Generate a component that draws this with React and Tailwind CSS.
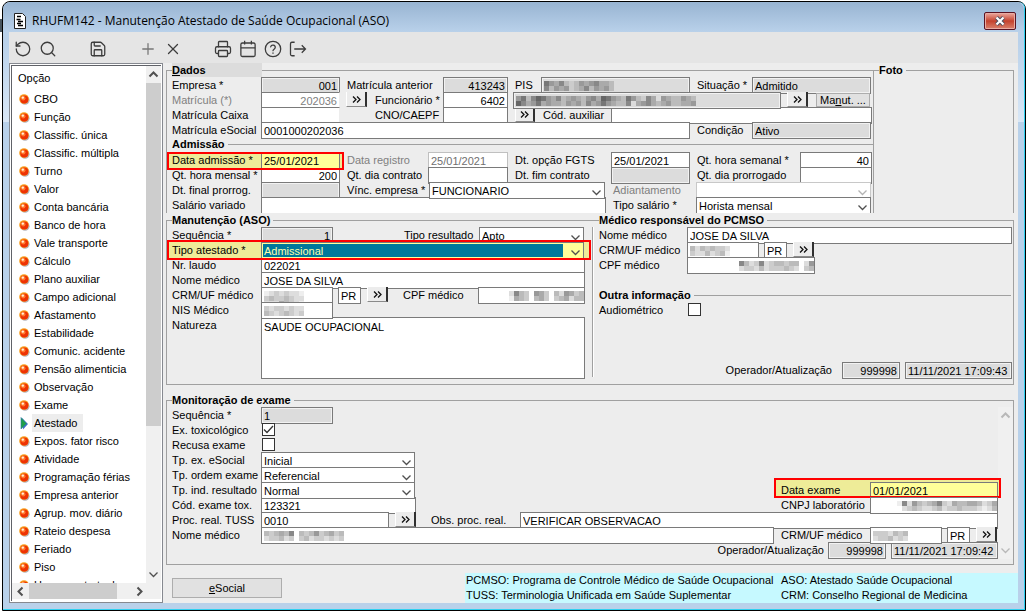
import { Plus, Printer, RotateCcw, Save, Search, X } from 'lucide-react';
import clsx from 'clsx';

const menuItems = [
  'CBO', 'Função', 'Classific. única', 'Classific. múltipla', 'Turno', 'Valor', 'Conta bancária',
  'Banco de hora', 'Vale transporte', 'Cálculo', 'Plano auxiliar', 'Campo adicional', 'Afastamento',
  'Estabilidade', 'Comunic. acidente', 'Pensão alimenticia', 'Observação', 'Exame', 'Atestado',
  'Expos. fator risco', 'Atividade', 'Programação férias', 'Empresa anterior', 'Agrup. mov. diário',
  'Rateio despesa', 'Feriado', 'Piso', 'Horas contratual',
];

function CalendarIcon() {
  return (
    <svg width="18" height="18" viewBox="0 0 24 24" fill="none" stroke="currentColor" strokeWidth="1.7">
      <rect x="2.5" y="4" width="19" height="18" rx="2" />
      <path d="M2.5 10.5h19M7.5 1v5M16.5 1v5" />
    </svg>
  );
}

function HelpIcon() {
  return (
    <svg width="18" height="18" viewBox="0 0 24 24" fill="none" stroke="currentColor" strokeWidth="1.7" strokeLinecap="round">
      <circle cx="12" cy="12" r="10.3" />
      <path d="M8.9 9.2a3.1 3.1 0 0 1 6.1.9c0 2-3 2.4-3 4.2M12 17.3v.4" />
    </svg>
  );
}

function ExitIcon() {
  return (
    <svg width="18" height="18" viewBox="0 0 24 24" fill="none" stroke="currentColor" strokeWidth="1.7">
      <path d="M7.5 3H4a2 2 0 0 0-2 2v14a2 2 0 0 0 2 2h3.5M7 12h15M17 7l5 5-5 5" />
    </svg>
  );
}

const tools = [
  ['Desfazer', RotateCcw], ['Pesquisar', Search], null, ['Salvar', Save], null, ['Incluir', Plus],
  ['Excluir', X], null, ['Imprimir', Printer], ['Calendário', CalendarIcon], ['Ajuda', HelpIcon], ['Sair', ExitIcon],
];

function Chevron({ dir = 'down', className = 'text-[#505050]' }) {
  const paths = {
    down: 'M1.5 3.5L5.5 7.5L9.5 3.5',
    up: 'M1.5 7.5L5.5 3.5L9.5 7.5',
    left: 'M7.5 1.5L3.5 5.5L7.5 9.5',
    right: 'M3.5 1.5L7.5 5.5L3.5 9.5',
  };
  return (
    <svg width="11" height="11" viewBox="0 0 11 11" fill="none" stroke="currentColor" strokeWidth={dir === 'down' ? 1.3 : 2} className={className}>
      <path d={paths[dir]} />
    </svg>
  );
}

function Ball() {
  return (
    <svg width="11" height="11" viewBox="0 0 11 11" className="shrink-0">
      <circle cx="6" cy="6.2" r="4.6" fill="#b4b4bc" />
      <circle cx="5" cy="5" r="4.8" fill="#f9a01e" />
      <circle cx="5.3" cy="5.4" r="4" fill="#ee3204" />
      <circle cx="4.3" cy="4.2" r="2.2" fill="#ff7a30" />
      <circle cx="3.8" cy="3.6" r="1.2" fill="#fff3d8" />
    </svg>
  );
}

function Pointer() {
  return (
    <svg width="11" height="13" viewBox="0 0 11 13" className="shrink-0">
      <path d="M3 1l6 6-5 5.5z" fill="#3f6fc4" />
      <path d="M2 .5l5.5 6L2 12z" fill="#1fa04a" stroke="#2a78a8" strokeWidth=".6" />
    </svg>
  );
}

// Masked personal data: every hex digit is the grey level of one block
function Mask({ rows, className }) {
  return (
    <svg width={rows[0].length * 5} height={rows.length * 5} shapeRendering="crispEdges" className={clsx('shrink-0', className)} aria-hidden="true">
      {rows.map((row, y) =>
        [...row].map((c, x) => c !== '.' && <rect key={`${x}-${y}`} x={x * 5} y={y * 5} width="5" height="5" fill={`#${c}${c}${c}`} />)
      )}
    </svg>
  );
}

function Row({ className, children }) {
  return <div className={clsx('flex h-[15px] items-start', className)}>{children}</div>;
}

function Label({ htmlFor, className, children }) {
  return (
    <label htmlFor={htmlFor} className={clsx('shrink-0 whitespace-nowrap leading-[17px]', className)}>
      {children}
    </label>
  );
}

function Field({ id, label, value = '', gray, right, className }) {
  return (
    <input
      id={id}
      aria-label={label}
      defaultValue={value}
      readOnly={gray}
      className={clsx(
        'h-[17px] min-w-0 rounded-none border border-[#7a7a7a] px-[2px] pt-px outline-none',
        gray ? 'bg-[#dcdcdc] shadow-[inset_0_0_0_1px_#f2f2f2]' : !className?.includes('bg-') && 'bg-white',
        right && 'text-right',
        className
      )}
    />
  );
}

// Field whose value is masked
function Hidden({ id, label, rows, gray, right, className }) {
  return (
    <div className={clsx('relative flex shrink-0', className)}>
      <Field id={id} label={label} gray={gray} className="w-full" />
      <Mask rows={rows} className={clsx('absolute top-[4px]', right ? 'right-px' : 'left-[3px]')} />
    </div>
  );
}

function Select({ id, value, disabled, className, selectClass = 'bg-white' }) {
  return (
    <div className={clsx('relative flex shrink-0', className)}>
      <select
        id={id}
        disabled={disabled}
        defaultValue={value}
        className={clsx('h-[17px] w-full appearance-none rounded-none border px-[2px] pb-[2px] outline-none', disabled ? 'border-[#c8c8c8]' : 'border-[#7a7a7a]', selectClass)}
      >
        <option>{value}</option>
      </select>
      <span className="pointer-events-none absolute right-[3px] top-[5px]">
        <Chevron className={disabled ? 'text-[#b4b4b4]' : 'text-[#505050]'} />
      </span>
    </div>
  );
}

function Lookup({ label, className = 'w-[21px]' }) {
  return (
    <button aria-label={label} className={clsx('flex h-[15px] shrink-0 items-center justify-center border-b border-l border-r-2 border-b-[#8a8a8a] border-l-white border-r-[#303030] bg-[#ececec]', className)}>
      <svg width="9" height="7" viewBox="0 0 9 7" fill="none" stroke="#111" strokeWidth="1.3">
        <path d="M1 .5l3 3-3 3M5 .5l3 3-3 3" />
      </svg>
    </button>
  );
}

function Highlight({ frame, children }) {
  return (
    <div className="relative flex">
      <span className={clsx('absolute bg-[#eeec98]', frame)} />
      <div className="relative flex">{children}</div>
      <span className={clsx('pointer-events-none absolute border-2 border-[#ff0000]', frame)} />
    </div>
  );
}

function Box({ id, checked }) {
  return (
    <span className="relative flex">
      <input id={id} type="checkbox" defaultChecked={checked} className="peer m-px size-[13px] appearance-none border border-[#333] bg-white" />
      <svg width="11" height="9" viewBox="0 0 11 9" fill="none" stroke="#333" strokeWidth="1.3" className="pointer-events-none absolute left-[2px] top-[3px] hidden peer-checked:block">
        <path d="M1 4.5l3 3L10 1" />
      </svg>
    </span>
  );
}

function Sidebar() {
  return (
    <nav className="flex w-[154px] shrink-0 flex-col border border-[#868990] bg-white p-px">
      <div className="flex min-h-0 flex-1 flex-col border-l border-t border-[#606268] pb-[2px]">
        <div className="flex h-0 min-h-0 flex-1">
          <div className="min-w-0 flex-1 overflow-hidden">
            <p className="h-[24px] pl-[6px] leading-[24px]">Opção</p>
            <ul>
              {menuItems.map((item) => (
                <li key={item} className="flex h-[18px] items-center gap-[2px] pl-[7px]">
                  {item === 'Atestado' ? <Pointer /> : <Ball />}
                  <a href="#" className={clsx('whitespace-nowrap px-[2px] leading-[18px]', item === 'Atestado' && 'bg-[#ededed] pr-[6px]')}>
                    {item}
                  </a>
                </li>
              ))}
            </ul>
          </div>
          <div className="flex w-[15px] flex-col items-center bg-[#f0f0f0]">
            <span className="flex h-[17px] items-center"><Chevron dir="up" /></span>
            <span className="w-full flex-[343] bg-[#cdcdcd]" />
            <span className="flex-[140]" />
            <span className="flex h-[17px] items-center"><Chevron dir="down" /></span>
          </div>
        </div>
        <div className="flex h-[16px] items-center bg-[#f0f0f0] pr-[15px]">
          <span className="flex w-[17px] justify-center"><Chevron dir="left" /></span>
          <span className="h-full w-[88px] bg-[#cdcdcd]" />
          <span className="flex flex-1 justify-end pr-px"><Chevron dir="right" /></span>
        </div>
      </div>
    </nav>
  );
}

function Dados() {
  return (
    <fieldset className="w-[707px] shrink-0 border-l border-t border-[#a0a0a0] pl-[5px]">
      <legend className="h-[14px] w-[90px] bg-[#dcdcdc] font-bold leading-[14px]">
        <u>D</u>ados
      </legend>
      <Row>
        <Label htmlFor="empresa" className="w-[89px]">Empresa *</Label>
        <Field id="empresa" value="001" gray right className="w-[79px]" />
        <Label htmlFor="matAnterior" className="w-[103px] pl-[7px]">Matrícula anterior</Label>
        <Field id="matAnterior" value="413243" gray right className="w-[65px]" />
        <Label htmlFor="pis" className="w-[33px] pl-[7px]">PIS</Label>
        <Hidden id="pis" gray className="w-[149px]" rows={['79a8bcb9a98aab', '8b9a9cba8b9a9b']} />
        <Label htmlFor="situacao" className="w-[62px] pl-[7px]">Situação *</Label>
        <Field id="situacao" value="Admitido" gray className="w-[119px]" />
      </Row>
      <Row>
        <Label htmlFor="matricula" className="w-[89px] text-[#808080]">Matrícula (*)</Label>
        <Field id="matricula" value="202036" right className="w-[79px] border-r-[#ededed] text-[#808080]" />
        <Lookup label="Buscar matrícula" className="ml-[6px] w-[21px]" />
        <Label htmlFor="funcionario" className="w-[76px] pl-[8px]">Funcionário *</Label>
        <Field id="funcionario" value="6402" right className="w-[65px]" />
        <Hidden label="Nome do funcionário" gray className="ml-[5px] w-[268px]" rows={['97b8679a8ba9ab98a679ab79bc8a.9abb9ab', '68a97a9aab9a9b8a979abb8.a98aba9bbaa9']} />
        <Lookup label="Buscar funcionário" className="ml-[6px] w-[21px]" />
        <button className="ml-[8px] mt-px h-[14px] w-[54px] border border-[#adadad] bg-[#e1e1e1] leading-[12px]">
          Ma<u>n</u>ut. ...
        </button>
      </Row>
      <Row>
        <Label htmlFor="matCaixa" className="w-[89px]">Matrícula Caixa</Label>
        <Field id="matCaixa" className="w-[79px] border-r-[#ededed]" />
        <Label htmlFor="cno" className="w-[103px] pl-[35px]">CNO/CAEPF</Label>
        <Field id="cno" className="w-[65px]" />
        <Lookup label="Buscar CNO" className="ml-[7px] w-[20px]" />
        <Label htmlFor="codAuxiliar" className="w-[76px] pl-[8px]">Cód. auxiliar</Label>
        <Field id="codAuxiliar" className="w-[261px]" />
      </Row>
      <Row>
        <Label htmlFor="matEsocial" className="w-[89px]">Matrícula eSocial</Label>
        <Field id="matEsocial" value="0001000202036" className="w-[429px]" />
        <Label htmlFor="condicao" className="w-[62px] pl-[7px]">Condição</Label>
        <Field id="condicao" value="Ativo" gray className="w-[119px]" />
      </Row>
      <div className="flex h-[15px] items-center gap-[3px]">
        <h2 className="font-bold leading-[13px]">Admissão</h2>
        <span className="h-px flex-1 bg-[#a0a0a0]" />
      </div>
      <Row>
        <Highlight frame="-left-[5px] -right-[4px] top-0 h-[18px]">
          <Label htmlFor="dtAdmissao" className="w-[89px]">Data admissão *</Label>
          <Field id="dtAdmissao" value="25/01/2021" className="w-[79px] bg-[#ffff99]" />
        </Highlight>
        <Label htmlFor="dtRegistro" className="w-[88px] pl-[7px] text-[#808080]">Data registro</Label>
        <Field id="dtRegistro" value="25/01/2021" className="w-[80px] border-[#c0c0c0] text-[#707070]" />
        <Label htmlFor="dtFgts" className="w-[103px] pl-[7px]">Dt. opção FGTS</Label>
        <Field id="dtFgts" value="25/01/2021" className="w-[79px]" />
        <Label htmlFor="hrSemanal" className="w-[110px] pl-[7px]">Qt. hora semanal *</Label>
        <Field id="hrSemanal" value="40" right className="w-[72px]" />
      </Row>
      <Row>
        <Label htmlFor="hrMensal" className="w-[89px]">Qt. hora mensal *</Label>
        <Field id="hrMensal" value="200" right className="w-[79px]" />
        <Label htmlFor="diaContrato" className="w-[88px] pl-[7px]">Qt. dia contrato</Label>
        <Field id="diaContrato" className="w-[80px]" />
        <Label htmlFor="fimContrato" className="w-[103px] pl-[7px]">Dt. fim contrato</Label>
        <Field id="fimContrato" gray className="w-[79px]" />
        <Label htmlFor="diaProrrogado" className="w-[110px] pl-[7px]">Qt. dia prorrogado</Label>
        <Field id="diaProrrogado" className="w-[72px]" />
      </Row>
      <Row>
        <Label htmlFor="finalProrrog" className="w-[89px]">Dt. final prorrog.</Label>
        <Field id="finalProrrog" gray className="w-[79px]" />
        <Label htmlFor="vinculo" className="w-[89px] pl-[7px]">Vínc. empresa *</Label>
        <Select id="vinculo" value="FUNCIONARIO" className="w-[176px]" />
        <Label htmlFor="adiantamento" className="w-[91px] pl-[8px] text-[#808080]">Adiantamento</Label>
        <Select id="adiantamento" value="" disabled className="w-[175px]" />
      </Row>
      <Row className="h-[16px]! overflow-hidden">
        <Label htmlFor="salVariado" className="w-[89px]">Salário variado</Label>
        <Field id="salVariado" className="w-[345px]" />
        <Label htmlFor="tipoSalario" className="w-[90px] pl-[7px]">Tipo salário *</Label>
        <Select id="tipoSalario" value="Horista mensal" className="w-[175px]" />
      </Row>
    </fieldset>
  );
}

function Manutencao() {
  return (
    <fieldset className="flex w-[431px] shrink-0 border-b border-l border-t border-[#a0a0a0] pb-[5px] pl-[5px]">
      <legend className="h-[14px] pr-[3px] font-bold leading-[14px]">Manutenção (ASO)</legend>
      <div className="flex">
        <div>
          <Row>
            <Label htmlFor="sequencia" className="w-[89px]">Sequência *</Label>
            <Field id="sequencia" value="1" gray right className="w-[72px]" />
            <Label htmlFor="tipoResultado" className="w-[146px] pl-[71px]">Tipo resultado</Label>
            <Select id="tipoResultado" value="Apto" className="w-[105px]" />
          </Row>
          <Row>
            <Highlight frame="-left-[5px] -right-[7px] -top-[2px] h-[20px]">
              <Label htmlFor="tipoAtestado" className="w-[89px]">Tipo atestado *</Label>
              <Select
                id="tipoAtestado"
                value="Admissional"
                className="w-[323px]"
                selectClass="bg-[linear-gradient(to_left,#ffff99_20px,#00789b_20px)] text-[#ffffaa] shadow-[inset_0_0_0_1px_#ffff99]"
              />
            </Highlight>
          </Row>
          <Row>
            <Label htmlFor="laudo" className="w-[89px]">Nr. laudo</Label>
            <Field id="laudo" value="022021" className="w-[324px]" />
          </Row>
          <Row>
            <Label htmlFor="medico" className="w-[89px]">Nome médico</Label>
            <Field id="medico" value="JOSE DA SILVA" className="w-[324px]" />
          </Row>
          <Row>
            <Label htmlFor="crm" className="w-[89px]">CRM/UF médico</Label>
            <Hidden id="crm" className="w-[72px]" rows={['edcdcdde', 'cbccbcdd', 'dddabcde']} />
            <Field label="UF médico" value="PR" className="ml-[5px] w-[23px]" />
            <Lookup label="Buscar médico" className="ml-[6px] w-[21px]" />
            <Label htmlFor="cpf" className="w-[90px] pl-[15px]">CPF médico</Label>
            <Hidden id="cpf" right className="w-[107px]" rows={['d8bc.9ac.bd9acb', 'eabc.bac.cbadbb']} />
          </Row>
          <Row>
            <Label htmlFor="nis" className="w-[89px]">NIS Médico</Label>
            <Hidden id="nis" className="w-[72px]" rows={['cdccdcdd', 'bcdcbcdc']} />
          </Row>
          <div className="flex">
            <Label htmlFor="natureza" className="w-[89px]">Natureza</Label>
            <textarea id="natureza" defaultValue="SAUDE OCUPACIONAL" className="h-[62px] w-[324px] resize-none border border-[#7a7a7a] bg-white px-[2px] pt-[3px] leading-[13px]" />
          </div>
        </div>
        <span className="mb-[2px] ml-[7px] w-[2px] border-r border-white bg-[#a0a0a0]" />
      </div>
    </fieldset>
  );
}

function Responsavel() {
  return (
    <fieldset className="min-w-0 flex-1 border-b border-r border-t border-[#a0a0a0] pb-[5px] pl-[2px] pr-px">
      <legend className="h-[14px] pr-[3px] font-bold leading-[14px]">Médico responsável do PCMSO</legend>
      <Row>
        <Label htmlFor="respNome" className="w-[88px]">Nome médico</Label>
        <Field id="respNome" value="JOSE DA SILVA" className="flex-1" />
      </Row>
      <Row>
        <Label htmlFor="respCrm" className="w-[88px]">CRM/UF médico</Label>
        <Hidden id="respCrm" className="w-[72px]" rows={['bdbcbccd', 'cddbdcbe']} />
        <Field label="UF do responsável" value="PR" className="ml-[5px] w-[23px]" />
        <Lookup label="Buscar responsável" className="ml-[6px] w-[21px]" />
      </Row>
      <Row>
        <Label htmlFor="respCpf" className="w-[88px]">CPF médico</Label>
        <Hidden id="respCpf" right className="w-[128px]" rows={['8bdc8dcbbcbb.d9', 'dccdbdcccbcd.cb']} />
      </Row>
      <div className="mt-[16px] flex h-[14px] items-center gap-[3px] pr-px">
        <h2 className="font-bold leading-[14px]">Outra informação</h2>
        <span className="h-px flex-1 bg-[#a0a0a0]" />
      </div>
      <Row>
        <Label htmlFor="audio" className="w-[88px]">Audiométrico</Label>
        <Box id="audio" />
      </Row>
      <Row className="mt-[45px] h-[17px]! justify-end">
        <Label htmlFor="operador" className="pr-[10px]">Operador/Atualização</Label>
        <Field id="operador" value="999998" gray right className="w-[58px]" />
        <Field label="Data da atualização" value="11/11/2021 17:09:43" gray className="ml-[5px] w-[107px]" />
      </Row>
    </fieldset>
  );
}

function Monitoracao() {
  return (
    <fieldset className="mt-[8px] border border-[#a0a0a0] pb-[5px] pl-[5px]">
      <legend className="h-[14px] pr-[3px] font-bold leading-[14px]">Monitoração de exame</legend>
      <div className="flex">
        <div className="min-w-0 flex-1">
          <Row>
            <Label htmlFor="exSeq" className="w-[89px]">Sequência *</Label>
            <Field id="exSeq" value="1" gray className="w-[72px]" />
          </Row>
          <Row>
            <Label htmlFor="toxico" className="w-[89px]">Ex. toxicológico</Label>
            <Box id="toxico" checked />
          </Row>
          <Row>
            <Label htmlFor="recusa" className="w-[89px]">Recusa exame</Label>
            <Box id="recusa" />
          </Row>
          <Row>
            <Label htmlFor="tpEsocial" className="w-[89px]">Tp. ex. eSocial</Label>
            <Select id="tpEsocial" value="Inicial" className="w-[154px]" />
          </Row>
          <Row>
            <Label htmlFor="tpOrdem" className="w-[89px]">Tp. ordem exame</Label>
            <Select id="tpOrdem" value="Referencial" className="w-[154px]" />
          </Row>
          <Row className="justify-between">
            <div className="flex">
              <Label htmlFor="tpInd" className="w-[89px]">Tp. ind. resultado</Label>
              <Select id="tpInd" value="Normal" className="w-[154px]" />
            </div>
            <Highlight frame="-left-[7px] -right-[3px] -top-[4px] h-[20px]">
              <Label htmlFor="dtExame" className="w-[89px]">Data exame</Label>
              <Field id="dtExame" value="01/01/2021" className="w-[128px] bg-[#ffff99]" />
            </Highlight>
          </Row>
          <Row className="justify-between">
            <div className="flex">
              <Label htmlFor="codTox" className="w-[89px]">Cód. exame tox.</Label>
              <Field id="codTox" value="123321" className="w-[155px]" />
            </div>
            <div className="flex">
              <Label htmlFor="cnpj" className="w-[89px]">CNPJ laboratório</Label>
              <Hidden id="cnpj" right className="w-[128px]" rows={['e8d9bcba8cdabbaabdca', '.dcbcddcbdccbcccdedb']} />
            </div>
          </Row>
          <Row>
            <Label htmlFor="tuss" className="w-[89px]">Proc. real. TUSS</Label>
            <Field id="tuss" value="0010" className="w-[128px]" />
            <Lookup label="Buscar TUSS" className="ml-[6px] w-[21px]" />
            <Label htmlFor="obs" className="w-[104px] pl-[15px]">Obs. proc. real.</Label>
            <Field id="obs" value="VERIFICAR OBSERVACAO" className="flex-1" />
          </Row>
          <Row>
            <Label htmlFor="exMedico" className="w-[89px]">Nome médico</Label>
            <Hidden id="exMedico" className="min-w-0 flex-1" rows={['bcbab8.bcb9cbacb', 'dccbdc.cbdccdcdc']} />
            <Label htmlFor="exCrm" className="w-[96px] pl-[7px]">CRM/UF médico</Label>
            <Hidden id="exCrm" className="w-[72px]" rows={['cccdbcb', 'dccbdcd']} />
            <Field label="UF do exame" value="PR" className="ml-[5px] w-[23px]" />
            <Lookup label="Buscar médico do exame" className="ml-[6px] mr-px w-[21px]" />
          </Row>
          <Row className="h-[17px]! justify-end">
            <Label htmlFor="exOperador" className="pr-[4px]">Operador/Atualização</Label>
            <Field id="exOperador" value="999998" gray right className="w-[58px]" />
            <Field label="Data da atualização do exame" value="11/11/2021 17:09:42" gray className="ml-[5px] w-[107px]" />
          </Row>
        </div>
        <div className="flex w-[15px] flex-col items-center justify-between bg-[#f0f0f0] py-[3px]">
          <Chevron dir="up" className="text-[#b8b8b8]" />
          <Chevron dir="down" className="text-[#b8b8b8]" />
        </div>
      </div>
    </fieldset>
  );
}

export default function App() {
  return (
    <div className="relative flex h-screen flex-col bg-white pb-[2px] pl-[2px] pr-[2px] pt-px font-['Liberation_Sans',Arial,sans-serif] text-[11px] text-black">
      <span className="absolute left-0 top-[19px] h-[13px] w-[2px] bg-[#48555f]" />
      <div className="flex min-h-0 flex-1 flex-col rounded-t-lg border border-black bg-[linear-gradient(#b9d1ea_40px,#d9e7f6_120px,#b9d1ea_120px)]">
        <div className="flex min-h-0 flex-1 flex-col rounded-t-md border-b border-r border-[#2fd0f0] px-[6px] pb-[6px]">
          <header className="-mx-[6px] flex h-[30px] shrink-0 items-center rounded-t-lg bg-linear-to-b from-[#98b4d2] to-[#b9d1ea] pl-[11px] pr-[8px] pt-[7px]">
            <svg width="12" height="16" viewBox="0 0 12 16" className="shrink-0">
              <path d="M.5.5h8l3 3v12h-11z" fill="#fff" stroke="#222" />
              <path d="M3 3.5h4M2.5 6.5h4M4 8.5h5M3 10.5h4M4 12.5h5" stroke="#000" strokeWidth="1.4" />
            </svg>
            <h1 className="flex-1 pl-[6px] font-['Open_Sans',sans-serif] text-[12px] leading-[16px]">
              RHUFM142 - Manutenção Atestado de Saúde Ocupacional (ASO)
            </h1>
            <button aria-label="Fechar" className="flex h-[18px] w-[32px] items-center justify-center rounded-[2px] border border-[#5a1322] bg-linear-to-b from-[#eba79d] via-[#c4412d] to-[#d9806c] shadow-[inset_0_0_0_1px_#e9aca3]">
              <svg width="12" height="10" viewBox="0 0 12 10" fill="none">
                <path d="M2.5 1.5l7 7M9.5 1.5l-7 7" stroke="#4a4f60" strokeWidth="4" />
                <path d="M2.5 1.5l7 7M9.5 1.5l-7 7" stroke="#fff" strokeWidth="2.2" />
              </svg>
            </button>
          </header>

          <div className="flex h-[31px] shrink-0 items-center bg-[#e5e5e5] pl-px">
            {tools.map((tool, i) => {
              if (!tool) return <span key={i} className="w-[25px]" />;
              const [name, Icon] = tool;
              return (
                <button key={name} aria-label={name} className={clsx('flex w-[25px] justify-center pt-[3px]', name === 'Incluir' ? 'text-[#777]' : 'text-[#3c3c3c]')}>
                  <Icon size={18} strokeWidth={1.7} />
                </button>
              );
            })}
          </div>

          <div className="flex min-h-0 flex-1 bg-[#ededed]">
            <Sidebar />
            <main className="flex min-w-0 flex-1 flex-col pl-[3px]">
              <div className="flex pr-[4px]">
                <Dados />
                <fieldset className="min-w-0 flex-1 border-l border-r border-t border-[#a0a0a0] pl-[5px]">
                  <legend className="h-[14px] pr-[3px] font-bold leading-[14px]">Foto</legend>
                </fieldset>
              </div>
              <div className="flex pr-[4px]">
                <Manutencao />
                <Responsavel />
              </div>
              <div className="pr-[4px]">
                <Monitoracao />
              </div>
              <footer className="mt-auto flex items-start justify-between">
                <button className="ml-[6px] mt-[5px] h-[20px] w-[110px] border border-[#adadad] bg-[#e1e1e1]">
                  <u>e</u>Social
                </button>
                <div className="flex w-[553px] bg-[#c6f9ff] pl-px leading-[15px]">
                  <p className="w-[315px]">
                    PCMSO: Programa de Controle Médico de Saúde Ocupacional
                    <br />
                    TUSS: Terminologia Unificada em Saúde Suplementar
                  </p>
                  <p>
                    ASO: Atestado Saúde Ocupacional
                    <br />
                    CRM: Conselho Regional de Medicina
                  </p>
                </div>
              </footer>
            </main>
          </div>
        </div>
      </div>
    </div>
  );
}
